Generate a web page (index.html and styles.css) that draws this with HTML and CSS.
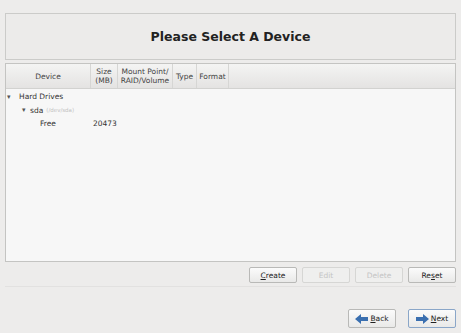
FILE: index.html
```html
<!DOCTYPE html>
<html lang="en">
<head>
  <meta charset="UTF-8">
  <title>Please Select A Device</title>
  <link rel="stylesheet" href="styles.css">
</head>
<body>
  <div class="page">
    <div class="title-box">
      <h1 class="title">Please Select A Device</h1>
    </div>

    <div class="tree">
      <div class="tree-head">
        <div class="col col-device">Device</div>
        <div class="col col-size">Size<br>(MB)</div>
        <div class="col col-mount">Mount Point/<br>RAID/Volume</div>
        <div class="col col-type">Type</div>
        <div class="col col-format">Format</div>
        <div class="col col-rest"></div>
      </div>
      <div class="tree-body">
        <div class="row lvl0"><span class="arrow">&#9662;</span>Hard Drives</div>
        <div class="row lvl1"><span class="arrow">&#9662;</span>sda <span class="dev">(/dev/sda)</span></div>
        <div class="row lvl2"><span class="name">Free</span><span class="size">20473</span></div>
      </div>
    </div>

    <div class="actions">
      <button class="btn"><u>C</u>reate</button>
      <button class="btn" disabled>Edit</button>
      <button class="btn" disabled>Delete</button>
      <button class="btn">Re<u>s</u>et</button>
    </div>

    <div class="divider"></div>

    <div class="nav">
      <button class="btn nav-btn">
        <svg width="13" height="10" viewBox="0 0 13 10"><path d="M0 5 L6 0 L6 3 L13 3 L13 7 L6 7 L6 10 Z" fill="#3a6fb0"/></svg>
        <span><u>B</u>ack</span>
      </button>
      <button class="btn nav-btn next">
        <svg width="13" height="10" viewBox="0 0 13 10"><path d="M13 5 L7 0 L7 3 L0 3 L0 7 L7 7 L7 10 Z" fill="#3a6fb0"/></svg>
        <span><u>N</u>ext</span>
      </button>
    </div>
  </div>
</body>
</html>
```

FILE: styles.css
```css
body {
  margin: 0;
  padding: 0;
  background-color: #edeceb;
  font-family: 'DejaVu Sans', 'Liberation Sans', sans-serif;
  color: #333;
}

.page {
  width: 461px;
  height: 333px;
  padding: 13px 5px 0;
  box-sizing: border-box;
}

.title-box {
  height: 47px;
  border: 1px solid #cbcbc9;
  background-color: #ecebea;
  box-sizing: border-box;
  display: flex;
  align-items: center;
  justify-content: center;
}

.title {
  margin: 0;
  font-size: 12.5px;
  font-weight: bold;
  color: #222;
}

.tree {
  margin-top: 3px;
  height: 199px;
  border: 1px solid #c4c4c2;
  background-color: #f7f7f7;
  box-sizing: border-box;
}

.tree-head {
  display: flex;
  height: 24px;
  border-bottom: 1px solid #d2d2d0;
  background: linear-gradient(#f4f4f3, #e4e3e2);
}

.col {
  font-size: 7.5px;
  line-height: 9px;
  color: #444;
  text-align: center;
  display: flex;
  align-items: center;
  justify-content: center;
  border-right: 1px solid #d6d6d4;
  box-sizing: border-box;
}

.col-device { width: 85px; }
.col-size { width: 27px; }
.col-mount { width: 55px; }
.col-type { width: 24px; }
.col-format { width: 32px; }
.col-rest { flex: 1; border-right: none; }

.tree-body {
  padding-top: 1px;
}

.row {
  height: 13.5px;
  display: flex;
  align-items: center;
  font-size: 7.5px;
  color: #333;
}

.arrow {
  font-size: 7px;
  color: #555;
  width: 11px;
}

.lvl0 { padding-left: 1px; }
.lvl0 .arrow { width: 12px; }
.lvl1 { padding-left: 16px; }
.lvl1 .arrow { width: 8px; }
.lvl2 { padding-left: 34px; }

.dev {
  font-size: 5.5px;
  color: #c2c2c2;
  margin-left: 3px;
}

.name { width: 53px; }

.actions {
  display: flex;
  justify-content: flex-end;
  gap: 5px;
  margin-top: 5px;
}

.btn {
  width: 48px;
  height: 16px;
  padding: 0;
  border: 1px solid #b9b9b7;
  border-radius: 2px;
  background: linear-gradient(#fbfbfb, #e9e9e8);
  font-family: 'DejaVu Sans', 'Liberation Sans', sans-serif;
  font-size: 7.5px;
  color: #222;
}

.btn:disabled {
  color: #c4c4c4;
  border-color: #d6d6d4;
  background: #efefee;
}

.divider {
  height: 1px;
  background-color: #e2e1e0;
  margin-top: 3px;
}

.nav {
  display: flex;
  justify-content: flex-end;
  gap: 12px;
  margin-top: 22px;
}

.nav-btn {
  height: 19px;
  display: flex;
  align-items: center;
  justify-content: center;
  gap: 2px;
}

.next {
  border-color: #8aa6c8;
}
```
